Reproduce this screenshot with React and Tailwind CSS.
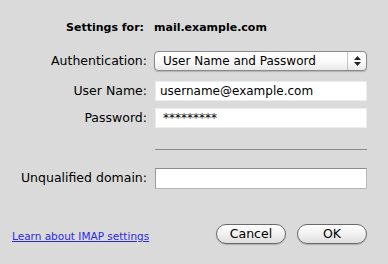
import React from 'react';

function Row({ label, children, className = '' }) {
  return (
    <div className={`flex items-center ${className}`}>
      <div className="w-[147px] text-right whitespace-nowrap text-[12.5px]">{label}</div>
      <div className="ml-2 w-[212px]">{children}</div>
    </div>
  );
}

function PopUp({ value }) {
  return (
    <div className="relative flex items-center h-[20px] rounded-[4px] border border-[#8a8a8a] bg-linear-to-b from-white via-[#fbfbfb] to-[#e9e9e9] shadow-[0_1px_1px_rgba(0,0,0,0.18)]">
      <span className="pl-[8px] flex-1 leading-none">{value}</span>
      <div className="h-full w-[19px] border-l border-[#c4c4c4] flex flex-col items-center justify-center gap-[2px]">
        <svg width="7" height="4" viewBox="0 0 7 4"><path d="M3.5 0L7 4H0z" fill="#222" /></svg>
        <svg width="7" height="4" viewBox="0 0 7 4"><path d="M0 0h7L3.5 4z" fill="#222" /></svg>
      </div>
    </div>
  );
}

function Field({ value, boxed = false }) {
  return (
    <div
      className={`flex items-center bg-white pl-[4px] ${
        boxed
          ? 'h-[21px] border border-[#b9b9b9] border-t-[#8c8c8c] border-l-[#9a9a9a]'
          : 'h-[20px] border border-[#ececec]'
      }`}
    >
      {value}
    </div>
  );
}

function PillButton({ children }) {
  return (
    <button className="w-[70px] h-[20px] rounded-full border border-[#6a6a6a] bg-linear-to-b from-white via-[#f1f1f1] to-[#dedede] shadow-[0_1px_1px_rgba(0,0,0,0.2)] text-[12.5px] leading-none text-black">
      {children}
    </button>
  );
}

export default function App() {
  return (
    <div className="w-[388px] h-[264px] bg-[#dadada] text-black text-[12px] font-['DejaVu_Sans',sans-serif] overflow-hidden">
      <div className="pt-[17px] flex flex-col">
        <Row label={<span className="font-bold text-[11px] pr-[3px]">Settings for:</span>} className="h-[20px]">
          <span className="font-bold text-[11px] -ml-[1px]">mail.example.com</span>
        </Row>

        <Row label="Authentication:" className="mt-[14px]">
          <div className="-ml-[1px]">
            <PopUp value="User Name and Password" />
          </div>
        </Row>

        <Row label="User Name:" className="mt-[10px]">
          <Field value="username@example.com" />
        </Row>

        <Row label="Password:" className="mt-[7px]">
          <Field value={<span className="pl-[3px]">*********</span>} />
        </Row>

        <div className="mt-[21px] ml-[155px] w-[212px] h-px bg-[#8c8c8c]" />

        <Row label="Unqualified domain:" className="mt-[18px]">
          <Field value="" boxed />
        </Row>

        <div className="mt-[34px] flex items-center pl-[12px] pr-[21px]">
          <a href="#" className="text-[10.5px] text-[#2a2ae0] underline mt-[6px]">
            Learn about IMAP settings
          </a>
          <div className="ml-auto flex gap-[11px]">
            <PillButton>Cancel</PillButton>
            <PillButton>OK</PillButton>
          </div>
        </div>
      </div>
    </div>
  );
}
